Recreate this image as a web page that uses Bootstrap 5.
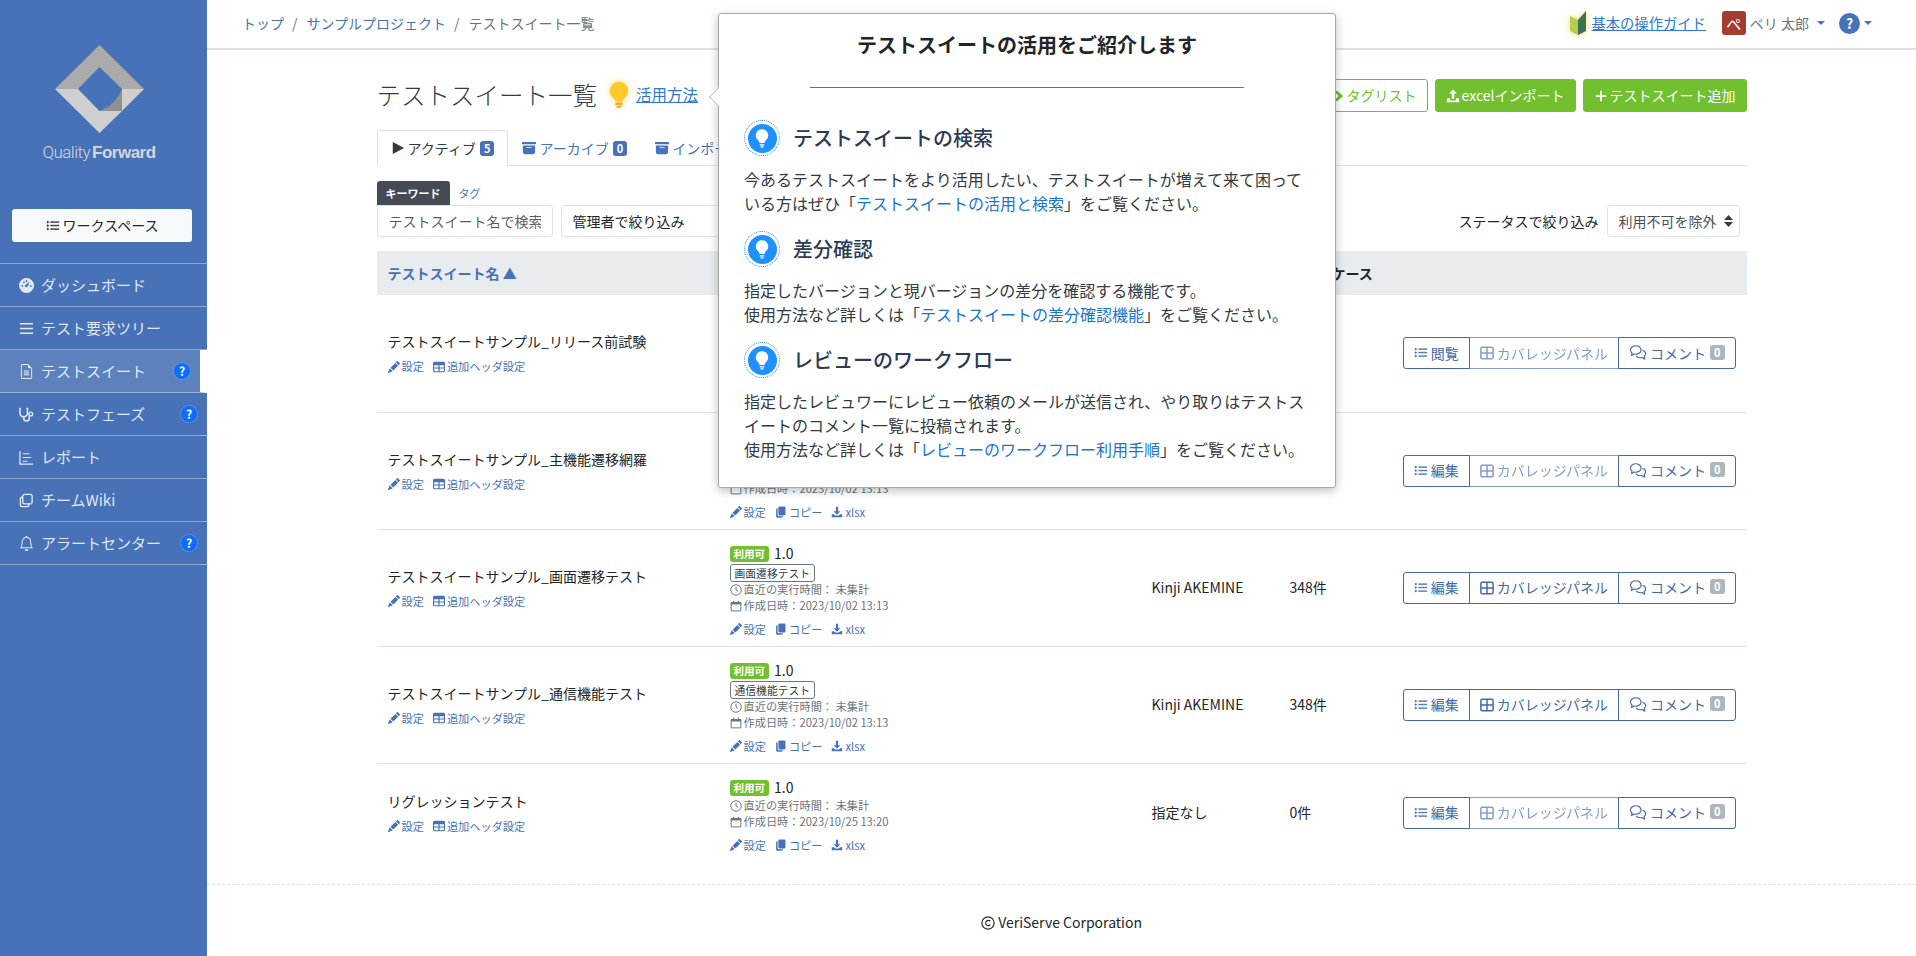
<!doctype html>
<html lang="ja">

<head>
	<meta charset="utf-8">
	<meta name="viewport" content="width=device-width, initial-scale=1">
	<title>テストスイート一覧</title>
	<link href="https://cdn.jsdelivr.net/npm/bootstrap@5.3.3/dist/css/bootstrap.min.css" rel="stylesheet" crossorigin="anonymous">
	<style>
		body {
			font-family: "Noto Sans CJK JP", "Noto Sans", sans-serif;
			font-size: 14px;
			color: #212529;
			background: #fff;
		}

		a {
			color: #4872b7;
			text-decoration: none;
		}

		.ico {
			width: 1em;
			height: 1em;
			fill: currentColor;
			flex: none;
			vertical-align: -.125em;
		}

		/* sidebar */
		.side {
			width: 207px;
			flex: none;
			min-height: 100vh;
			background: #4872b7;
		}

		.logo-box {
			padding: 45px 9px 0 0;
			text-align: center;
		}

		.logo-box svg {
			display: block;
			margin: 0 auto;
		}

		.logo-word {
			margin-top: 8px;
			height: 22px;
			line-height: 22px;
			font-size: 17px;
			letter-spacing: -.5px;
			color: #d3d6da;
			font-family: "Liberation Sans", sans-serif;
		}

		.logo-word span {
			font-family: Roboto, sans-serif;
			font-weight: 300;
			margin-right: 2px;
		}

		.ws-btn {
			display: flex;
			align-items: center;
			justify-content: center;
			gap: 3px;
			width: 180px;
			height: 33px;
			margin: 46px 15px 21px 12px;
			padding: 0;
			font-size: 14px;
			color: #212529;
			background: #f8f9fa;
			border: 0;
			border-radius: 3px;
		}

		.side-menu {
			border-top: 1px solid rgba(255, 255, 255, .38);
		}

		.side-link {
			display: flex;
			align-items: center;
			height: 43px;
			padding: 0 10px 0 19px;
			gap: 7px;
			font-size: 15px;
			color: rgba(255, 255, 255, .85);
			border-bottom: 1px solid rgba(255, 255, 255, .38);
		}

		.side-link.on {
			background: #5c81bd;
			border-right: 7px solid #fff;
		}

		.side-link:hover {
			color: #fff;
		}

		.help-dot {
			display: flex;
			align-items: center;
			justify-content: center;
			width: 16px;
			height: 16px;
			margin-left: auto;
			font-size: 12px;
			font-weight: 700;
			line-height: 1;
			color: #fff;
			background: #0d6efd;
			border-radius: 50%;
			outline: 1px dotted #6ea8fe;
		}

		/* top bar */
		.top-bar {
			height: 50px;
			padding: 0 44px 2px 35px;
			border-bottom: 2px solid #dee2e6;
		}

		.top-bar .breadcrumb {
			margin: 0;
			--bs-breadcrumb-divider-color: #6c757d;
		}

		.top-bar .breadcrumb-item+.breadcrumb-item {
			padding-left: 8px;
		}

		.top-bar .breadcrumb-item+.breadcrumb-item::before {
			padding-right: 9px;
		}

		.top-bar .breadcrumb-item.active {
			color: #6c757d;
		}

		.guide-link {
			font-size: 14.3px;
			color: #2f77d0;
			text-decoration: underline;
		}

		.user-mark {
			display: flex;
			align-items: center;
			justify-content: center;
			width: 24px;
			height: 24px;
			color: #fff;
			font-size: 15px;
			line-height: 1;
			background: #a53c30;
			border-radius: 3px;
		}

		.caret-down {
			display: inline-block;
			width: 0;
			height: 0;
			border-top: 4px solid #4872b7;
			border-left: 4px solid transparent;
			border-right: 4px solid transparent;
		}

		.help-top {
			display: flex;
			align-items: center;
			justify-content: center;
			width: 21px;
			height: 21px;
			margin-left: 14px;
			color: #fff;
			font-weight: 700;
			font-size: 14px;
			background: #4872b7;
			border-radius: 50%;
		}

		/* content */
		.page-wrap {
			width: 1370px;
			margin: 0 auto;
			position: relative;
		}

		.page-head {
			height: 80px;
			padding-top: 28px;
		}

		.page-title {
			font-size: 24.5px;
			font-weight: 300;
			margin: 0;
			line-height: 33px;
			color: #343a40;
		}

		.how-link {
			margin-left: 6px;
			font-size: 15.5px;
			color: #2f77d0;
			text-decoration: underline;
		}

		.bulb-glow {
			filter: drop-shadow(0 0 3px rgba(255, 200, 40, .7));
		}

		.head-bulb {
			margin-left: 11px;
		}

		.btn-grass,
		.btn-grass:hover {
			display: inline-flex;
			align-items: center;
			gap: 2px;
			height: 33px;
			padding: 0 10px;
			font-size: 14px;
			color: #fff;
			background: #72bf2f;
			border: 1px solid #72bf2f;
			border-radius: 3px;
		}

		.btn-grass-line,
		.btn-grass-line:hover {
			color: #72bf2f;
			background: #fff;
		}

		.head-btns {
			gap: 7px;
			margin-top: 1px;
		}

		.page-tabs {
			height: 36px;
			font-size: 14px;
		}

		.page-tabs .nav-link {
			display: flex;
			align-items: center;
			gap: 3px;
			height: 36px;
			padding: 0 13px;
			color: #4872b7;
			border-radius: 3px 3px 0 0;
		}

		.page-tabs .nav-link.active {
			color: #343a40;
		}

		.tab-count {
			padding: 2px 4px;
			margin-left: 1px;
			font-size: 11px;
			background: #4872b7;
			border-radius: 3px;
		}

		.find-tabs {
			height: 24px;
			margin-top: 15px;
			font-size: 11px;
		}

		.find-tab {
			display: flex;
			align-items: center;
			padding: 0 9px;
			color: #4872b7;
		}

		.find-tab.on {
			color: #fff;
			font-weight: 700;
			background: #444b55;
			border-radius: 3px 3px 0 0;
		}

		.find-input {
			width: 176px;
			height: 32px;
			padding: 0 11px;
			font-size: 14px;
			border-radius: 0 3px 3px 3px;
		}

		.find-select {
			width: 280px;
			height: 32px;
			padding: 0 11px;
			font-size: 14px;
			border-radius: 3px;
		}

		.state-select {
			width: 133px;
			height: 32px;
			margin-right: 7px;
			padding: 0 11px;
			font-size: 14px;
			color: #495057;
			border-radius: 3px;
			background-position: right 6px center;
			background-size: 9px 12px;
			background-image: url("data:image/svg+xml,%3csvg xmlns='http://www.w3.org/2000/svg' viewBox='0 0 9 12'%3e%3cpath fill='%23343a40' d='M4.5 0 9 5H0zM4.5 12 0 7h9z'/%3e%3c/svg%3e");
		}

		.suite-table {
			table-layout: fixed;
			margin: 14px 0 0;
			font-size: 14px;
		}

		.suite-table thead th {
			height: 44px;
			padding: 0 11px;
			vertical-align: middle;
			font-weight: 700;
			background: #e9ecef;
			border-bottom: 0;
		}

		.suite-table thead th a {
			font-weight: 700;
		}

		.suite-table td {
			padding: 14px 11px 7px;
			vertical-align: middle;
			height: 117px;
		}

		.suite-table td:nth-child(n+3) {
			padding: 0 11px;
		}

		.suite-table tr.no-tag td {
			height: 99px;
		}

		.suite-table tr:last-child td {
			border-bottom: 0;
		}

		.suite-name {
			line-height: 21px;
			margin-top: -7px;
		}

		.mini-links {
			display: flex;
			gap: 9px;
			margin-top: 6px;
			font-size: 11.2px;
			line-height: 17px;
		}

		.mini-links a {
			display: inline-flex;
			align-items: center;
			gap: 2px;
		}

		.mini-links .ico {
			width: 12px;
			height: 12px;
		}

		.state-line {
			display: flex;
			align-items: center;
			gap: 5px;
			height: 20px;
		}

		.state-ok {
			padding: 0 4px;
			height: 16px;
			line-height: 16px;
			font-size: 10.5px;
			font-weight: 700;
			background: #72bf2f;
			border-radius: 3px;
		}

		.tag-line {
			display: flex;
			align-items: flex-start;
			height: 18px;
		}

		.suite-tag {
			display: block;
			height: 18px;
			padding: 0 4px;
			line-height: 16px;
			font-size: 10.8px;
			color: #343a40;
			border: 1px solid #6c757d;
			border-radius: 3px;
		}

		.meta-line {
			display: flex;
			align-items: center;
			gap: 2px;
			height: 16px;
			font-size: 11.2px;
			color: #6c757d;
		}

		.meta-line .ico {
			width: 12px;
			height: 12px;
		}

		.row-acts {
			margin-top: 5px;
			line-height: 20px;
		}

		.act-group .btn {
			display: inline-flex;
			align-items: center;
			gap: 3px;
			height: 32px;
			padding: 0 10px;
			font-size: 14px;
			--bs-btn-color: #4269a8;
			--bs-btn-border-color: #4269a8;
			--bs-btn-hover-bg: #4269a8;
			--bs-btn-hover-border-color: #4269a8;
			--bs-btn-disabled-color: #4269a8;
			--bs-btn-disabled-border-color: #4269a8;
			--bs-border-radius: 3px;
			--bs-btn-border-radius: 3px;
		}

		.act-group .talk-ico {
			width: 18px;
			height: 18px;
		}

		.zero-count {
			padding: 2px 4px;
			margin-left: 1px;
			font-size: 11px;
			background: #adb5bd;
			border-radius: 3px;
		}

		.page-foot {
			margin-top: 22px;
			padding-top: 27px;
			text-align: center;
			border-top: 1px dashed #dee2e6;
		}

		/* guide popover */
		.guide-pop {
			position: absolute;
			top: 13px;
			left: 511px;
			width: 618px;
			height: 475px;
			max-width: none;
			padding: 14px 25px 0;
			font-family: inherit;
			font-size: 16px;
			line-height: 24px;
			color: #343a40;
			background: #fff;
			border: 1px solid #a8a8a8;
			border-radius: 3px;
			box-shadow: 0 3px 10px rgba(0, 0, 0, .25);
			z-index: 20;
		}

		.pop-tip {
			position: absolute;
			top: 76px;
			left: -7px;
			width: 14px;
			height: 14px;
			background: #fff;
			border-left: 1px solid #c8c8c8;
			border-bottom: 1px solid #c8c8c8;
			transform: rotate(45deg);
		}

		.pop-title {
			margin: 0;
			font-size: 20px;
			font-weight: 700;
			line-height: 34px;
			text-align: center;
			color: #212529;
		}

		.pop-rule {
			width: 434px;
			height: 1px;
			margin: 25px auto 32px;
			background: #3b78c9;
		}

		.pop-head {
			display: flex;
			align-items: center;
			gap: 13px;
			height: 36px;
			margin: 0 0 11px;
			font-size: 20px;
			font-weight: 500;
			color: #2b3a55;
		}

		.pop-mark {
			display: flex;
			align-items: center;
			justify-content: center;
			width: 36px;
			height: 36px;
			flex: none;
			border: 1px dotted #1e90ff;
			border-radius: 50%;
		}

		.pop-mark span {
			display: flex;
			align-items: center;
			justify-content: center;
			width: 29px;
			height: 29px;
			color: #fff;
			background: #1e90ff;
			border-radius: 50%;
		}

		.pop-text {
			margin: 0 0 16px;
		}

		.pop-text a {
			color: #1976d2;
		}
	</style>
</head>

<body>
	<svg width="0" height="0" class="position-absolute">
		<symbol id="i-list" viewBox="0 0 16 16"><path d="M5 11.5a.5.5 0 0 1 .5-.5h9a.5.5 0 0 1 0 1h-9a.5.5 0 0 1-.5-.5zm0-4a.5.5 0 0 1 .5-.5h9a.5.5 0 0 1 0 1h-9a.5.5 0 0 1-.5-.5zm0-4a.5.5 0 0 1 .5-.5h9a.5.5 0 0 1 0 1h-9a.5.5 0 0 1-.5-.5zm-3 1a1 1 0 1 0 0-2 1 1 0 0 0 0 2zm0 4a1 1 0 1 0 0-2 1 1 0 0 0 0 2zm0 4a1 1 0 1 0 0-2 1 1 0 0 0 0 2z" stroke="currentColor" stroke-width=".5"/></symbol>
		<symbol id="i-dash" viewBox="0 0 16 16"><path fill-rule="evenodd" d="M8 0a8 8 0 1 1 0 16A8 8 0 0 1 8 0zm3.6 3.6L7.4 7a1.5 1.5 0 1 0 1.9 1.9zM3.5 7.4a1 1 0 1 0 0 2 1 1 0 0 0 0-2zM5.2 3.6a1 1 0 1 0 0 2 1 1 0 0 0 0-2zM8 2.2a1 1 0 1 0 0 2 1 1 0 0 0 0-2zm4.5 5.2a1 1 0 1 0 0 2 1 1 0 0 0 0-2z"/></symbol>
		<symbol id="i-lines" viewBox="0 0 16 16"><path d="M1 3h14M1 8h14M1 13h14" fill="none" stroke="currentColor" stroke-width="1.5"/></symbol>
		<symbol id="i-file" viewBox="0 0 16 16"><path d="M5.5 7a.5.5 0 0 0 0 1h5a.5.5 0 0 0 0-1h-5zM5 9.5a.5.5 0 0 1 .5-.5h5a.5.5 0 0 1 0 1h-5a.5.5 0 0 1-.5-.5zm0 2a.5.5 0 0 1 .5-.5h5a.5.5 0 0 1 0 1h-5a.5.5 0 0 1-.5-.5z"/><path d="M9.5 0H4a2 2 0 0 0-2 2v12a2 2 0 0 0 2 2h8a2 2 0 0 0 2-2V4.5L9.5 0zm0 1v2A1.5 1.5 0 0 0 11 4.5h2V14a1 1 0 0 1-1 1H4a1 1 0 0 1-1-1V2a1 1 0 0 1 1-1h5.5z"/></symbol>
		<symbol id="i-steth" viewBox="0 0 16 16"><path d="M1.5 1.5h-.5v5a4 4 0 0 0 8 0v-5h-.5M5 10.5v1.500a3 3 0 0 0 6 0v-2" fill="none" stroke="currentColor" stroke-width="1.6" stroke-linecap="round"/><circle cx="12.5" cy="7.500" r="2" fill="none" stroke="currentColor" stroke-width="1.5"/></symbol>
		<symbol id="i-chart" viewBox="0 0 16 16"><path d="M1 1v14h14M4 4h7M4 8h9M4 12h5" fill="none" stroke="currentColor" stroke-width="1.3"/></symbol>
		<symbol id="i-pages" viewBox="0 0 16 16"><path d="M6 1.500h6a2 2 0 0 1 2 2v6a2 2 0 0 1-2 2H6a2 2 0 0 1-2-2v-6a2 2 0 0 1 2-2z" fill="none" stroke="currentColor" stroke-width="1.4"/><path d="M4 4.500H3a1.500 1.500 0 0 0-1.500 1.500v7A1.500 1.500 0 0 0 3 14.500h6a1.500 1.500 0 0 0 1.500-1.500v-1" fill="none" stroke="currentColor" stroke-width="1.4"/></symbol>
		<symbol id="i-bell" viewBox="0 0 16 16"><path d="M8 16a2 2 0 0 0 2-2H6a2 2 0 0 0 2 2zM8 1.918l-.797.161A4.002 4.002 0 0 0 4 6c0 .628-.134 2.197-.459 3.742-.16.767-.376 1.566-.663 2.258h10.244c-.287-.692-.502-1.49-.663-2.258C12.134 8.197 12 6.628 12 6a4.002 4.002 0 0 0-3.203-3.92L8 1.917zM14.22 12c.223.447.481.801.78 1H1c.299-.199.557-.553.78-1C2.68 10.2 3 6.88 3 6c0-2.42 1.72-4.44 4.005-4.901a1 1 0 1 1 1.990 0A5.002 5.002 0 0 1 13 6c0 .88.32 4.2 1.220 6z"/></symbol>
		<symbol id="i-play" viewBox="0 0 16 16"><path d="M2 1.200 15 8 2 14.800z"/></symbol>
		<symbol id="i-box" viewBox="0 0 16 16"><path d="M12.643 15C13.979 15 15 13.845 15 12.5V5H1v7.5C1 13.845 2.021 15 3.357 15h9.286zM5.5 7h5a.5.5 0 0 1 0 1h-5a.5.5 0 0 1 0-1zM.8 1a.8.8 0 0 0-.8.8V3a.8.8 0 0 0 .8.8h14.4A.8.8 0 0 0 16 3V1.8a.8.8 0 0 0-.8-.8H.8z"/></symbol>
		<symbol id="i-pen" viewBox="0 0 16 16"><path d="M12.854.146a.5.5 0 0 0-.707 0L10.5 1.793 14.207 5.5l1.647-1.646a.5.5 0 0 0 0-.708l-3-3zm.646 6.061L9.793 2.5 3.293 9H3.5a.5.5 0 0 1 .5.5v.5h.5a.5.5 0 0 1 .5.5v.5h.5a.5.5 0 0 1 .5.5v.5h.5a.5.5 0 0 1 .5.5v.207l6.5-6.5zm-7.468 7.468A.5.5 0 0 1 6 13.5V13h-.5a.5.5 0 0 1-.5-.5V12h-.5a.5.5 0 0 1-.5-.5V11h-.5a.5.5 0 0 1-.5-.5V10h-.5a.499.499 0 0 1-.175-.032l-.179.178a.5.5 0 0 0-.11.168l-2 5a.5.5 0 0 0 .65.65l5-2a.5.5 0 0 0 .168-.11l.178-.178z"/></symbol>
		<symbol id="i-grid" viewBox="0 0 16 16"><path fill-rule="evenodd" d="M2 1h12a2 2 0 0 1 2 2v10a2 2 0 0 1-2 2H2a2 2 0 0 1-2-2V3a2 2 0 0 1 2-2zM1.500 5.500v3h5.700v-3zm7.300 0v3h5.700v-3zm-7.300 4.500v2.500a1 1 0 0 0 1 1h4.700V10zm7.300 0v3.500h4.700a1 1 0 0 0 1-1V10z"/></symbol>
		<symbol id="i-tian" viewBox="0 0 16 16"><path d="M2.500 1.500h11A1.500 1.500 0 0 1 15 3v10a1.500 1.500 0 0 1-1.500 1.500h-11A1.500 1.500 0 0 1 1 13V3a1.500 1.500 0 0 1 1.500-1.500zM1 8h14M8 1.500v13" fill="none" stroke="currentColor" stroke-width="1.700"/></symbol>
		<symbol id="i-copy" viewBox="0 0 16 16"><path d="M6 .5h6.500a1.500 1.500 0 0 1 1.500 1.500v9a1.500 1.500 0 0 1-1.500 1.500H6A1.500 1.500 0 0 1 4.500 11V2A1.500 1.500 0 0 1 6 .5z"/><path d="M3.500 3v8.500A2 2 0 0 0 5.500 13.500H10.500V14a1.500 1.500 0 0 1-1.500 1.500H3A1.500 1.500 0 0 1 1.500 14V4.500A1.500 1.500 0 0 1 3 3z"/></symbol>
		<symbol id="i-down" viewBox="0 0 16 16"><path d="M6.500 1h3v6h3L8 11.500 3.500 7h3zM1 11h3l1.500 1.500h5L12 11h3v4H1z"/></symbol>
		<symbol id="i-up" viewBox="0 0 16 16"><path d="M8 .5 12.500 5h-3v6h-3V5h-3zM1 10.500h3.500v1.500a1 1 0 0 0 1 1h5a1 1 0 0 0 1-1v-1.500H15V15H1z"/></symbol>
		<symbol id="i-talk" viewBox="0 0 16 16"><path d="M6 1.500c2.600 0 4.700 1.700 4.700 3.800S8.600 9.100 6 9.100c-.6 0-1.100-.1-1.600-.2L2.200 10.300l.5-2.300C1.800 7.300 1.300 6.300 1.300 5.300 1.300 3.200 3.400 1.500 6 1.500z" fill="none" stroke="currentColor" stroke-width="1" stroke-linejoin="round"/><path d="M12 5.500c1.700.5 2.800 1.700 2.800 3.100 0 1-.5 1.800-1.300 2.500l.5 2.400-2.400-1.500c-.5.100-1 .2-1.500.2-1.600 0-3-.6-3.800-1.600" fill="none" stroke="currentColor" stroke-width="1" stroke-linejoin="round"/></symbol>
		<symbol id="i-clock" viewBox="0 0 16 16"><circle cx="8" cy="8" r="7" fill="none" stroke="currentColor" stroke-width="1.300"/><path d="M8 3.500V8l3 2" fill="none" stroke="currentColor" stroke-width="1.300"/></symbol>
		<symbol id="i-cal" viewBox="0 0 16 16"><path d="M1.500 4.500h13v10h-13z" fill="none" stroke="currentColor" stroke-width="1.300"/><path d="M1 2.500h14v3.500H1zM4 1h1.500v2H4zM10.500 1H12v2h-1.500z"/></symbol>
		<symbol id="i-bulb" viewBox="0 0 16 16"><path d="M8 1a5 5 0 0 0-3.200 8.800c.7.600 1.200 1.300 1.200 2.200h4c0-.9.500-1.600 1.200-2.200A5 5 0 0 0 8 1zM6.200 13h3.600v1H6.200zM6.800 14.500h2.400V15.500H6.800z"/></symbol>
		<symbol id="i-plus" viewBox="0 0 16 16"><path d="M8 2v12M2 8h12" fill="none" stroke="currentColor" stroke-width="2"/></symbol>
		<symbol id="i-tag" viewBox="0 0 16 16"><path d="M2 2h5l7 6-7 6H2l7-6z"/></symbol>
		<symbol id="i-copyright" viewBox="0 0 16 16"><circle cx="8" cy="8" r="7" fill="none" stroke="currentColor" stroke-width="1.300"/><path d="M10.600 6A3 3 0 1 0 10.600 10" fill="none" stroke="currentColor" stroke-width="1.300"/></symbol>
	</svg>

	<div class="d-flex">
		<aside class="side">
			<div class="logo-box">
				<svg width="89" height="88" viewBox="0 0 89 88">
					<path d="M44.500 0 89 44H67L44.500 22 23 44H0z" fill="#aaaaaa" />
					<path d="M0 44H23L44.500 66H67L44.500 88z" fill="#cfcfcf" />
					<path d="M67 44H89L67 66z" fill="#cfcfcf" />
					<path d="M67 44V66H44.500C55 62 63 54 67 44z" fill="#909090" />
				</svg>
				<div class="logo-word"><span>Quality</span><b>Forward</b></div>
			</div>
			<button class="ws-btn" type="button"><svg class="ico"><use href="#i-list" /></svg>ワークスペース</button>
			<nav class="side-menu">
				<a class="side-link" href="#"><svg class="ico"><use href="#i-dash" /></svg>ダッシュボード</a>
				<a class="side-link" href="#"><svg class="ico"><use href="#i-lines" /></svg>テスト要求ツリー</a>
				<a class="side-link on" href="#"><svg class="ico"><use href="#i-file" /></svg>テストスイート<span class="help-dot">?</span></a>
				<a class="side-link" href="#"><svg class="ico"><use href="#i-steth" /></svg>テストフェーズ<span class="help-dot">?</span></a>
				<a class="side-link" href="#"><svg class="ico"><use href="#i-chart" /></svg>レポート</a>
				<a class="side-link" href="#"><svg class="ico"><use href="#i-pages" /></svg>チームWiki</a>
				<a class="side-link" href="#"><svg class="ico"><use href="#i-bell" /></svg>アラートセンター<span class="help-dot">?</span></a>
			</nav>
		</aside>

		<div class="flex-grow-1 d-flex flex-column position-relative">
			<header class="top-bar d-flex align-items-center justify-content-between">
				<ol class="breadcrumb">
					<li class="breadcrumb-item"><a href="#">トップ</a></li>
					<li class="breadcrumb-item"><a href="#">サンプルプロジェクト</a></li>
					<li class="breadcrumb-item active">テストスイート一覧</li>
				</ol>
				<div class="d-flex align-items-center">
					<svg width="18" height="26" viewBox="0 0 18 26" class="bulb-glow me-1">
						<path d="M1 6 9 10V25L1 21z" fill="#b5cf4c" />
						<path d="M17 1V21L9 25V10z" fill="#3f7350" />
					</svg>
					<a class="guide-link" href="#">基本の操作ガイド</a>
					<span class="user-mark ms-3">ペ</span>
					<span class="ms-1 text-secondary">ベリ 太郎</span>
					<span class="caret-down ms-2"></span>
					<span class="help-top">?</span>
					<span class="caret-down ms-1"></span>
				</div>
			</header>

			<main class="page-wrap">
				<div class="page-head d-flex align-items-start justify-content-between">
					<div class="d-flex align-items-center">
						<h1 class="page-title">テストスイート一覧</h1>
						<svg width="22" height="28" viewBox="2 0 12 17" class="bulb-glow head-bulb"><path fill="#ffc928" d="M8 .5a5.500 5.500 0 0 0-3.500 9.700c.8.700 1.300 1.400 1.300 2.300h4.400c0-.9.500-1.600 1.300-2.300A5.500 5.500 0 0 0 8 .5z" /><path fill="#f0a830" d="M5.800 13h4.400v1.500H5.800zM6.500 15h3v1.200h-3z" /></svg>
						<a class="how-link" href="#">活用方法</a>
					</div>
					<div class="d-flex head-btns">
						<a class="btn-grass btn-grass-line" href="#"><svg class="ico"><use href="#i-tag" /></svg>タグリスト</a>
						<a class="btn-grass" href="#"><svg class="ico"><use href="#i-up" /></svg>excelインポート</a>
						<a class="btn-grass" href="#"><svg class="ico"><use href="#i-plus" /></svg>テストスイート追加</a>
					</div>
				</div>

				<ul class="nav nav-tabs page-tabs">
					<li class="nav-item"><a class="nav-link active" href="#"><svg class="ico"><use href="#i-play" /></svg>アクティブ<span class="badge tab-count">5</span></a></li>
					<li class="nav-item"><a class="nav-link" href="#"><svg class="ico"><use href="#i-box" /></svg>アーカイブ<span class="badge tab-count">0</span></a></li>
					<li class="nav-item"><a class="nav-link" href="#"><svg class="ico"><use href="#i-box" /></svg>インポート</a></li>
				</ul>

				<div class="d-flex find-tabs">
					<span class="find-tab on">キーワード</span>
					<span class="find-tab">タグ</span>
				</div>
				<div class="d-flex align-items-center">
					<input class="form-control find-input me-2" type="text" placeholder="テストスイート名で検索">
					<select class="form-select find-select">
						<option>管理者で絞り込み</option>
					</select>
					<label class="ms-auto me-2">ステータスで絞り込み</label>
					<select class="form-select state-select">
						<option>利用不可を除外</option>
					</select>
				</div>

				<table class="table suite-table">
					<colgroup>
						<col style="width:342px">
						<col style="width:422px">
						<col style="width:138px">
						<col style="width:112px">
						<col>
					</colgroup>
					<thead>
						<tr>
							<th><a href="#">テストスイート名 ▲</a></th>
							<th></th>
							<th></th>
							<th colspan="2">テストケース</th>
						</tr>
					</thead>
					<tbody>
						<tr>
							<td>
								<div class="suite-name">テストスイートサンプル_リリース前試験</div>
								<div class="mini-links"><a href="#"><svg class="ico"><use href="#i-pen" /></svg>設定</a><a href="#"><svg class="ico"><use href="#i-grid" /></svg>追加ヘッダ設定</a></div>
							</td>
							<td></td>
							<td></td>
							<td></td>
							<td class="text-end">
								<div class="btn-group act-group"><a class="btn btn-outline-primary" href="#"><svg class="ico"><use href="#i-list" /></svg>閲覧</a><a class="btn btn-outline-primary disabled" href="#"><svg class="ico"><use href="#i-tian" /></svg>カバレッジパネル</a><a class="btn btn-outline-primary" href="#"><svg class="ico talk-ico"><use href="#i-talk" /></svg>コメント<span class="badge zero-count">0</span></a></div>
							</td>
						</tr>
						<tr>
							<td>
								<div class="suite-name">テストスイートサンプル_主機能遷移網羅</div>
								<div class="mini-links"><a href="#"><svg class="ico"><use href="#i-pen" /></svg>設定</a><a href="#"><svg class="ico"><use href="#i-grid" /></svg>追加ヘッダ設定</a></div>
							</td>
							<td>
								<div class="state-line"></div>
								<div class="tag-line"></div>
								<div class="meta-line"></div>
								<div class="meta-line"><svg class="ico"><use href="#i-cal" /></svg>作成日時：2023/10/02 13:13</div>
								<div class="mini-links row-acts"><a href="#"><svg class="ico"><use href="#i-pen" /></svg>設定</a><a href="#"><svg class="ico"><use href="#i-copy" /></svg>コピー</a><a href="#"><svg class="ico"><use href="#i-down" /></svg>xlsx</a></div>
							</td>
							<td></td>
							<td></td>
							<td class="text-end">
								<div class="btn-group act-group"><a class="btn btn-outline-primary" href="#"><svg class="ico"><use href="#i-list" /></svg>編集</a><a class="btn btn-outline-primary disabled" href="#"><svg class="ico"><use href="#i-tian" /></svg>カバレッジパネル</a><a class="btn btn-outline-primary" href="#"><svg class="ico talk-ico"><use href="#i-talk" /></svg>コメント<span class="badge zero-count">0</span></a></div>
							</td>
						</tr>
						<tr>
							<td>
								<div class="suite-name">テストスイートサンプル_画面遷移テスト</div>
								<div class="mini-links"><a href="#"><svg class="ico"><use href="#i-pen" /></svg>設定</a><a href="#"><svg class="ico"><use href="#i-grid" /></svg>追加ヘッダ設定</a></div>
							</td>
							<td>
								<div class="state-line"><span class="badge state-ok">利用可</span>1.0</div>
								<div class="tag-line"><span class="suite-tag">画面遷移テスト</span></div>
								<div class="meta-line"><svg class="ico"><use href="#i-clock" /></svg>直近の実行時間： 未集計</div>
								<div class="meta-line"><svg class="ico"><use href="#i-cal" /></svg>作成日時：2023/10/02 13:13</div>
								<div class="mini-links row-acts"><a href="#"><svg class="ico"><use href="#i-pen" /></svg>設定</a><a href="#"><svg class="ico"><use href="#i-copy" /></svg>コピー</a><a href="#"><svg class="ico"><use href="#i-down" /></svg>xlsx</a></div>
							</td>
							<td>Kinji AKEMINE</td>
							<td>348件</td>
							<td class="text-end">
								<div class="btn-group act-group"><a class="btn btn-outline-primary" href="#"><svg class="ico"><use href="#i-list" /></svg>編集</a><a class="btn btn-outline-primary" href="#"><svg class="ico"><use href="#i-tian" /></svg>カバレッジパネル</a><a class="btn btn-outline-primary" href="#"><svg class="ico talk-ico"><use href="#i-talk" /></svg>コメント<span class="badge zero-count">0</span></a></div>
							</td>
						</tr>
						<tr>
							<td>
								<div class="suite-name">テストスイートサンプル_通信機能テスト</div>
								<div class="mini-links"><a href="#"><svg class="ico"><use href="#i-pen" /></svg>設定</a><a href="#"><svg class="ico"><use href="#i-grid" /></svg>追加ヘッダ設定</a></div>
							</td>
							<td>
								<div class="state-line"><span class="badge state-ok">利用可</span>1.0</div>
								<div class="tag-line"><span class="suite-tag">通信機能テスト</span></div>
								<div class="meta-line"><svg class="ico"><use href="#i-clock" /></svg>直近の実行時間： 未集計</div>
								<div class="meta-line"><svg class="ico"><use href="#i-cal" /></svg>作成日時：2023/10/02 13:13</div>
								<div class="mini-links row-acts"><a href="#"><svg class="ico"><use href="#i-pen" /></svg>設定</a><a href="#"><svg class="ico"><use href="#i-copy" /></svg>コピー</a><a href="#"><svg class="ico"><use href="#i-down" /></svg>xlsx</a></div>
							</td>
							<td>Kinji AKEMINE</td>
							<td>348件</td>
							<td class="text-end">
								<div class="btn-group act-group"><a class="btn btn-outline-primary" href="#"><svg class="ico"><use href="#i-list" /></svg>編集</a><a class="btn btn-outline-primary" href="#"><svg class="ico"><use href="#i-tian" /></svg>カバレッジパネル</a><a class="btn btn-outline-primary" href="#"><svg class="ico talk-ico"><use href="#i-talk" /></svg>コメント<span class="badge zero-count">0</span></a></div>
							</td>
						</tr>
						<tr class="no-tag">
							<td>
								<div class="suite-name">リグレッションテスト</div>
								<div class="mini-links"><a href="#"><svg class="ico"><use href="#i-pen" /></svg>設定</a><a href="#"><svg class="ico"><use href="#i-grid" /></svg>追加ヘッダ設定</a></div>
							</td>
							<td>
								<div class="state-line"><span class="badge state-ok">利用可</span>1.0</div>
								<div class="meta-line"><svg class="ico"><use href="#i-clock" /></svg>直近の実行時間： 未集計</div>
								<div class="meta-line"><svg class="ico"><use href="#i-cal" /></svg>作成日時：2023/10/25 13:20</div>
								<div class="mini-links row-acts"><a href="#"><svg class="ico"><use href="#i-pen" /></svg>設定</a><a href="#"><svg class="ico"><use href="#i-copy" /></svg>コピー</a><a href="#"><svg class="ico"><use href="#i-down" /></svg>xlsx</a></div>
							</td>
							<td>指定なし</td>
							<td>0件</td>
							<td class="text-end">
								<div class="btn-group act-group"><a class="btn btn-outline-primary" href="#"><svg class="ico"><use href="#i-list" /></svg>編集</a><a class="btn btn-outline-primary disabled" href="#"><svg class="ico"><use href="#i-tian" /></svg>カバレッジパネル</a><a class="btn btn-outline-primary" href="#"><svg class="ico talk-ico"><use href="#i-talk" /></svg>コメント<span class="badge zero-count">0</span></a></div>
							</td>
						</tr>
					</tbody>
				</table>
			</main>

			<footer class="page-foot"><svg class="ico"><use href="#i-copyright" /></svg> VeriServe Corporation</footer>

			<div class="guide-pop">
				<span class="pop-tip"></span>
				<h3 class="pop-title">テストスイートの活用をご紹介します</h3>
				<div class="pop-rule"></div>
				<h4 class="pop-head"><span class="pop-mark"><span><svg class="ico"><use href="#i-bulb" /></svg></span></span>テストスイートの検索</h4>
				<p class="pop-text">今あるテストスイートをより活用したい、テストスイートが増えて来て困っている方はぜひ「<a href="#">テストスイートの活用と検索</a>」をご覧ください。</p>
				<h4 class="pop-head"><span class="pop-mark"><span><svg class="ico"><use href="#i-bulb" /></svg></span></span>差分確認</h4>
				<p class="pop-text">指定したバージョンと現バージョンの差分を確認する機能です。<br>使用方法など詳しくは「<a href="#">テストスイートの差分確認機能</a>」をご覧ください。</p>
				<h4 class="pop-head"><span class="pop-mark"><span><svg class="ico"><use href="#i-bulb" /></svg></span></span>レビューのワークフロー</h4>
				<p class="pop-text">指定したレビュワーにレビュー依頼のメールが送信され、やり取りはテストスイートのコメント一覧に投稿されます。<br>使用方法など詳しくは「<a href="#">レビューのワークフロー利用手順</a>」をご覧ください。</p>
			</div>
		</div>
	</div>

	<script src="https://cdn.jsdelivr.net/npm/bootstrap@5.3.3/dist/js/bootstrap.bundle.min.js" crossorigin="anonymous"></script>
</body>

</html>
